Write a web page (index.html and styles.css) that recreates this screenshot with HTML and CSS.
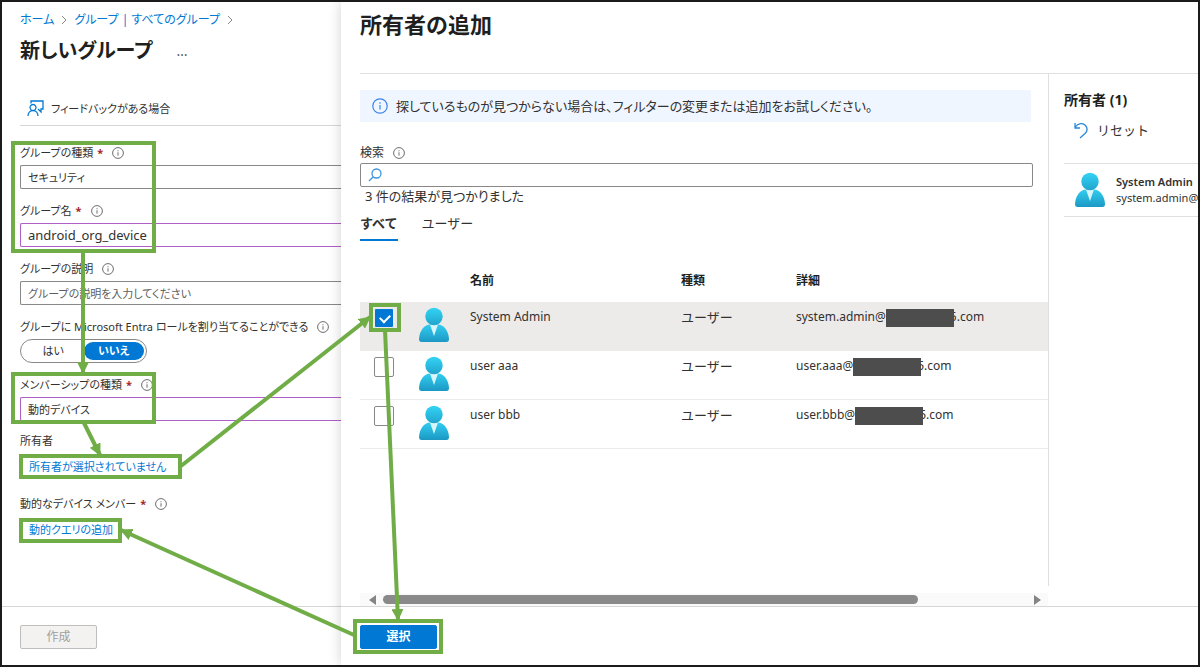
FILE: index.html
```html
<!DOCTYPE html>
<html lang="ja">
<head>
<meta charset="utf-8">
<meta name="viewport" content="width=device-width, initial-scale=1">
<title>新しいグループ</title>
<link rel="stylesheet" href="styles.css">
</head>
<body>
<svg class="defs" aria-hidden="true">
  <defs>
    <linearGradient id="head" x1="0" y1="0" x2="0" y2="1"><stop offset="0" stop-color="#32d4f5"/><stop offset="1" stop-color="#22a5cd"/></linearGradient>
    <linearGradient id="torso" x1="0" y1="0" x2="0" y2="1"><stop offset="0" stop-color="#32cdf0"/><stop offset="1" stop-color="#1b98c4"/></linearGradient>
    <symbol id="person" viewBox="0 0 32 36">
      <path d="M3.500 35Q1 35 1 32C1.500 24 6 17.500 12 17.500H20C26 17.500 30.500 24 31 32Q31 35 28.500 35Z" fill="url(#torso)"/>
      <path d="M12 17.500H20L16 29Z" fill="#d8f5fc"/>
      <circle cx="16" cy="9.500" r="8.700" fill="url(#head)"/>
    </symbol>
    <symbol id="info" viewBox="0 0 16 16">
      <circle cx="8" cy="8" r="7.200" fill="none" stroke="currentColor" stroke-width="1.200"/>
      <path d="M8 7v4.500M8 4.300v1.400" stroke="currentColor" stroke-width="1.200"/>
    </symbol>
  </defs>
</svg>

<div class="screen">
  <section class="blade">
    <div class="blade-body">
      <nav class="crumbs">
        <a href="#">ホーム</a><svg class="chevron" viewBox="0 0 6 10"><path d="M1 1l4 4-4 4"/></svg>
        <a href="#">グループ | すべてのグループ</a><svg class="chevron" viewBox="0 0 6 10"><path d="M1 1l4 4-4 4"/></svg>
      </nav>
      <div class="title-row"><h1>新しいグループ</h1><button class="more" type="button">…</button></div>
      <div class="toolbar">
        <button class="feedback" type="button">
          <svg viewBox="0 0 17 17" class="feedback-icon"><path d="M4 3.500V1h12v8h-2v3l-3-3M6 4.500a3 3 0 1 0 .01 0M1 16c0-3 2-5.500 5-5.500s5 2.500 5 5.500"/></svg>
          フィードバックがある場合
        </button>
      </div>
      <form class="form">
        <div class="field">
          <label for="type">グループの種類 <b>*</b> <svg class="info"><use href="#info"/></svg></label>
          <input id="type" class="box" value="セキュリティ">
        </div>
        <div class="field">
          <label for="name">グループ名 <b>*</b> <svg class="info"><use href="#info"/></svg></label>
          <input id="name" class="box edited latin" value="android_org_device">
        </div>
        <div class="field">
          <label for="desc">グループの説明 <svg class="info"><use href="#info"/></svg></label>
          <input id="desc" class="box" placeholder="グループの説明を入力してください">
        </div>
        <div class="field">
          <span class="label">グループに Microsoft Entra ロールを割り当てることができる <svg class="info"><use href="#info"/></svg></span>
          <div class="toggle">
            <button type="button">はい</button><button type="button" class="on">いいえ</button>
          </div>
        </div>
        <div class="field">
          <label for="member">メンバーシップの種類 <b>*</b> <svg class="info"><use href="#info"/></svg></label>
          <input id="member" class="box edited" value="動的デバイス">
        </div>
      </form>
      <div class="links">
        <div class="link-field"><span class="label">所有者</span><a href="#">所有者が選択されていません</a></div>
        <div class="link-field"><span class="label">動的なデバイス メンバー <b>*</b> <svg class="info"><use href="#info"/></svg></span><a href="#">動的クエリの追加</a></div>
      </div>
    </div>
    <footer class="foot"><button class="btn" type="button" disabled>作成</button></footer>
  </section>

  <section class="panel">
    <h2>所有者の追加</h2>
    <div class="panel-body">
      <div class="picker">
        <p class="notice"><svg class="notice-icon"><use href="#info"/></svg>探しているものが見つからない場合は、フィルターの変更または追加をお試しください。</p>
        <label class="search-label" for="search">検索 <svg class="info"><use href="#info"/></svg></label>
        <div class="search">
          <svg viewBox="0 0 14 14" class="search-icon"><circle cx="8.500" cy="5.500" r="4.500"/><path d="M5.300 8.700L1 13"/></svg>
          <input id="search" type="text">
        </div>
        <p class="result">3 件の結果が見つかりました</p>
        <div class="tabs"><button type="button" class="active">すべて</button><button type="button">ユーザー</button></div>
        <table class="users">
          <thead><tr><th class="c-check"></th><th class="c-avatar"></th><th class="c-name">名前</th><th class="c-type">種類</th><th>詳細</th></tr></thead>
          <tbody>
            <tr class="selected"><td><input type="checkbox" checked aria-label="System Admin"></td><td><svg class="person"><use href="#person"/></svg></td><td>System Admin</td><td>ユーザー</td><td>system.admin@<span class="mask"></span>5.com</td></tr>
            <tr><td><input type="checkbox" aria-label="user aaa"></td><td><svg class="person"><use href="#person"/></svg></td><td>user aaa</td><td>ユーザー</td><td>user.aaa@<span class="mask"></span>5.com</td></tr>
            <tr><td><input type="checkbox" aria-label="user bbb"></td><td><svg class="person"><use href="#person"/></svg></td><td>user bbb</td><td>ユーザー</td><td>user.bbb@<span class="mask"></span>5.com</td></tr>
          </tbody>
        </table>
        <div class="scrollbar">
          <svg viewBox="0 0 8 10"><path d="M8 0v10L1 5z"/></svg>
          <div class="track"><div class="thumb"></div></div>
          <svg viewBox="0 0 8 10"><path d="M0 0v10l7-5z"/></svg>
        </div>
      </div>
      <aside class="chosen">
        <h3>所有者 (1)</h3>
        <button class="reset" type="button"><svg viewBox="0 0 14 17"><path d="M1 1v5h5M1 5.500C4 1 9 .500 11.500 3.500S13 9.500 11 11.500L6 16"/></svg>リセット</button>
        <div class="owner"><svg class="person"><use href="#person"/></svg><div class="owner-text"><strong>System Admin</strong><span>system.admin@</span></div></div>
      </aside>
    </div>
    <footer class="foot"><button class="btn primary" type="button">選択</button></footer>
  </section>

  <svg class="flow" aria-hidden="true">
    <defs><marker id="tip" viewBox="0 0 12 12" refX="11" refY="6" markerWidth="12" markerHeight="12" markerUnits="userSpaceOnUse" orient="auto"><path d="M0 0L12 6L0 12Z"/></marker></defs>
    <g class="frames">
      <rect x="13" y="143" width="141" height="108"/>
      <rect x="13" y="374" width="141" height="48"/>
      <rect x="21" y="456" width="159" height="21"/>
      <rect x="21" y="520" width="99" height="21"/>
      <rect x="371" y="305" width="28" height="25"/>
      <rect x="355" y="621" width="86" height="31"/>
    </g>
    <g class="arrows">
      <path d="M83 252V373"/>
      <path d="M84 423L100 455"/>
      <path d="M181 466L370 317"/>
      <path d="M385 330L398 620"/>
      <path d="M354 635L121 530"/>
    </g>
  </svg>
</div>
</body>
</html>
```
FILE: styles.css
```css
* { box-sizing: border-box; }
body {
  margin: 0;
  font: 12px/20px "Noto Sans", "Noto Sans CJK JP", sans-serif;
  color: #323130;
}
button, input { font: inherit; font-feature-settings: inherit; color: inherit; }
button { border: 0; padding: 0; background: none; }
h1, h2, h3, p { margin: 0; }
a { color: #0078d4; text-decoration: none; }
svg { flex: none; }
.defs { position: absolute; width: 0; height: 0; }

.screen {
  position: relative;
  display: grid;
  grid-template-columns: 339px minmax(0, 1fr);
  min-height: 100vh;
  border: 2px solid #1b1b1b;
  overflow: hidden;
}
.blade, .panel { display: flex; flex-direction: column; min-width: 0; }
.blade { font-feature-settings: "palt"; }
.blade-body { flex: 1; padding: 8px 0 0 18px; font-size: 11px; }
.crumbs { display: flex; align-items: center; gap: 7px; font-size: 12px; }
.chevron { width: 6px; height: 10px; fill: none; stroke: #8a8886; }
.title-row { display: flex; align-items: center; gap: 24px; height: 42px; }
h1, h2 { line-height: 32px; font-weight: 700; color: #201f1e; }
h1 { font-size: 20px; }
h2 { font-size: 22px; }
.more { font-size: 14px; color: #605e5c; }
.toolbar { display: flex; align-items: center; height: 54px; padding: 20px 0 0 7px; border-bottom: 1px solid #d8d6d4; }
.feedback { display: flex; align-items: center; gap: 7px; }
.feedback-icon { width: 17px; height: 17px; fill: none; stroke: #0078d4; stroke-width: 1.3; }

.form { display: flex; flex-direction: column; gap: 12px; padding-top: 17px; }
.field { display: flex; flex-direction: column; gap: 2px; }
label, .label { display: flex; align-items: center; gap: 4px; height: 20px; white-space: nowrap; }
label b, .label b { color: #a4262c; }
.info { width: 12px; height: 12px; margin-left: 5px; color: #605e5c; }
.box { width: 100%; height: 24px; padding: 0 7px; border: 1px solid #8a8886; border-right: 0; border-radius: 2px 0 0 2px; background: #fff; }
.box.edited { border-color: #b05fc6; }
.box.latin { font-size: 13px; }
.box::placeholder { color: #605e5c; opacity: 1; }
.toggle { display: flex; width: 127px; height: 24px; padding: 2px; border: 1px solid #8a8886; border-radius: 12px; }
.toggle button { flex: 1; line-height: 18px; border-radius: 9px; }
.toggle .on { background: #0078d4; color: #fff; font-weight: 700; }
.links { display: flex; flex-direction: column; gap: 15px; padding-top: 10px; }
.link-field { display: flex; flex-direction: column; gap: 4px; }
.link-field a { padding-left: 9px; line-height: 24px; }

.foot { display: flex; height: 59px; padding: 18px; border-top: 1px solid #d8d6d4; }
.btn { width: 77px; height: 24px; border: 1px solid #c0bebc; border-radius: 2px; background: #f3f2f1; color: #a19f9d; }
.btn.primary { border-color: #0078d4; background: #0078d4; color: #fff; font-weight: 700; }
.panel .foot { padding-left: 19px; }

.panel { background: #fff; box-shadow: 0 0 12px rgba(0, 0, 0, .18); }
.panel h2 { padding: 6px 0 0 19px; }
.panel-body { flex: 1; display: grid; grid-template-columns: minmax(0, 1fr) 150px; margin: 33px 0 0 19px; border-top: 1px solid #e1dfdd; }
.picker { display: flex; flex-direction: column; padding-top: 16px; }
.notice { display: flex; align-items: center; gap: 8px; height: 32px; margin-right: 17px; padding-left: 12px; background: #f0f6ff; font-size: 13px; font-feature-settings: "palt"; white-space: nowrap; }
.notice-icon { width: 16px; height: 16px; color: #3b82e8; }
.search-label { margin-top: 21px; }
.search { display: flex; align-items: center; gap: 8px; height: 24px; margin-right: 15px; padding-left: 7px; border: 1px solid #8a8886; border-radius: 2px; }
.search-icon { width: 14px; height: 14px; fill: none; stroke: #3f93dc; stroke-width: 1.3; }
.search input { flex: 1; border: 0; outline: 0; height: 20px; }
.result { padding-left: 5px; font-size: 13px; line-height: 18px; font-feature-settings: "palt"; }
.tabs { display: flex; gap: 24px; height: 36px; padding-top: 8px; font-size: 13px; }
.tabs button { height: 28px; padding-bottom: 6px; border-bottom: 2px solid transparent; }
.tabs .active { font-weight: 700; border-color: #0078d4; }
.users { width: 100%; margin-top: 18px; border-collapse: separate; border-spacing: 0; table-layout: fixed; }
.users th { height: 43px; padding: 0; text-align: left; color: #201f1e; }
.users td { height: 49px; padding: 5px 0 0; border-bottom: 1px solid #edebe9; line-height: 20px; vertical-align: top; white-space: nowrap; }
.users td:nth-child(4) { font-size: 13px; }
.users .selected { background: #edebe9; }
.c-check { width: 58px; }
.c-avatar { width: 52px; }
.c-name { width: 211px; }
.c-type { width: 115px; }
.users input { appearance: none; display: block; width: 20px; height: 20px; margin: 1px 0 0 14px; border: 1px solid #8a8886; border-radius: 2px; background: #fff; }
.users input:checked { border-color: #edebe9; background: #0078d4; }
.users input:checked::after { content: ""; display: block; width: 8px; height: 5px; margin: 5px 0 0 5px; border: solid #fff; border-width: 0 0 2px 2px; transform: rotate(-45deg); }
.person { display: block; width: 32px; height: 36px; }
.mask { position: relative; display: inline-block; width: 68px; height: 18px; margin-right: -4px; vertical-align: middle; background: #4d4d4d; }
.scrollbar { display: flex; align-items: center; gap: 7px; height: 13px; margin-top: auto; padding: 0 6px 0 8px; background: #fafafa; }
.scrollbar svg { width: 8px; height: 10px; fill: #858585; }
.track { flex: 1; }
.thumb { width: 83%; height: 9px; border-radius: 5px; background: #8a8a8a; }

.chosen { display: flex; flex-direction: column; margin-bottom: 20px; padding: 16px 0 0 15px; border-left: 1px solid #e1dfdd; overflow: hidden; }
.chosen h3 { font-size: 14px; line-height: 20px; font-weight: 700; color: #201f1e; }
.reset { display: flex; align-items: center; gap: 9px; height: 40px; padding-left: 10px; font-size: 13px; }
.reset svg { width: 14px; height: 17px; fill: none; stroke: #2b88d8; stroke-width: 1.3; }
.owner { display: flex; align-items: center; gap: 10px; height: 54px; margin-top: 13px; padding-left: 10px; border: solid #e1dfdd; border-width: 1px 0; white-space: nowrap; }
.owner-text { display: flex; flex-direction: column; font-size: 11px; line-height: 16px; }
.owner-text strong { font-weight: 600; }

.flow { position: absolute; top: -2px; left: -2px; width: 1200px; height: 667px; pointer-events: none; }
.frames { fill: none; stroke: #70ad47; stroke-width: 4; }
.arrows { fill: none; stroke: #70ad47; stroke-width: 4; }
.arrows path { marker-end: url(#tip); }
#tip path { fill: #70ad47; stroke: none; }
```
